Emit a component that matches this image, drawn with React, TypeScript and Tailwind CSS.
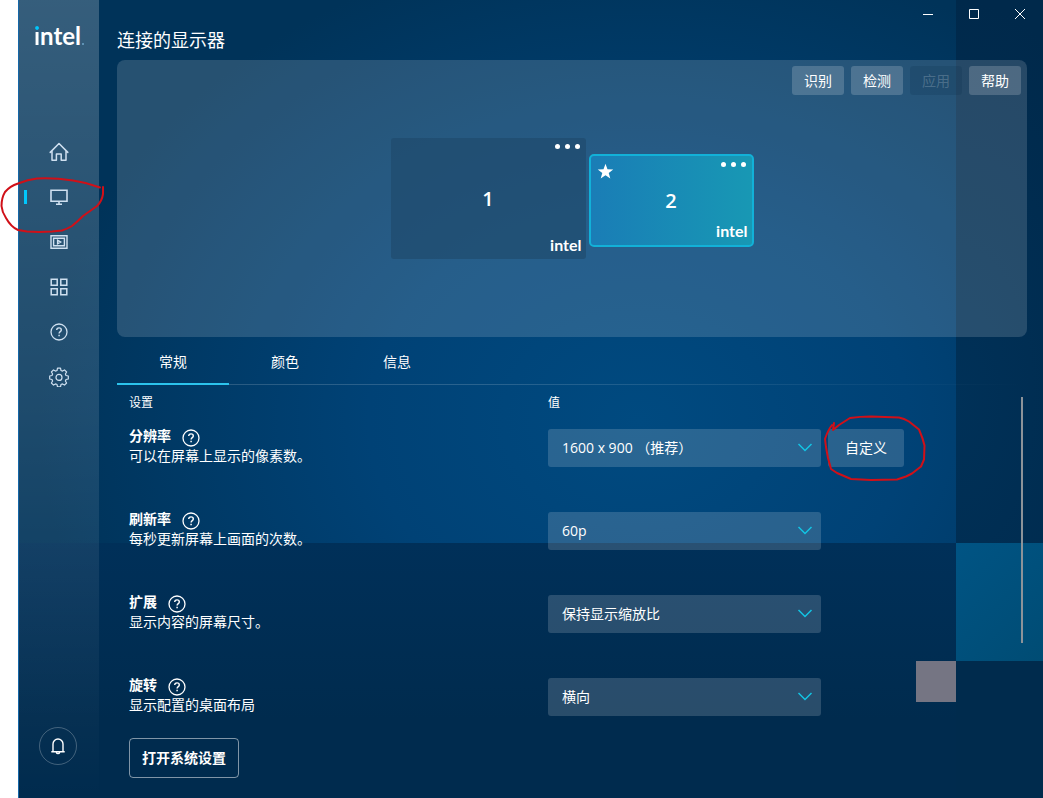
import React, { useState } from "react";

const FONT = "font-['Open_Sans','Noto_Sans_CJK_SC',sans-serif]";

type IconProps = { className?: string };

function HomeIcon() {
  return (
    <svg width="20" height="20" viewBox="0 0 20 20" fill="none" stroke="currentColor" strokeWidth="1.5" strokeLinejoin="round" strokeLinecap="round">
      <path d="M1.2 10.4 10 1.5l8.8 8.9M3 9v9.3h4.4v-6.4h4.8v6.4H17V9" />
    </svg>
  );
}

function DisplayIcon() {
  return (
    <svg width="20" height="20" viewBox="0 0 20 20" fill="none" stroke="currentColor" strokeWidth="1.6">
      <path d="M2 3.2h16v11H2zM10 14.2v2.600M7 17.200h6" />
    </svg>
  );
}

function VideoIcon() {
  return (
    <svg width="20" height="20" viewBox="0 0 20 20" fill="none" stroke="currentColor" strokeWidth="1.4">
      <path d="M2 3.8h16v12.400H2zM4.600 6.200h10.800v7.600H4.600z" />
      <path d="M8.600 8.300v3.400l3-1.700z" />
    </svg>
  );
}

function GridIcon() {
  return (
    <svg width="20" height="20" viewBox="0 0 20 20" fill="none" stroke="currentColor" strokeWidth="1.5">
      <path d="M2.200 2.200h6v6h-6zM11.800 2.200h6v6h-6zM2.200 11.800h6v6h-6zM11.800 11.800h6v6h-6z" />
    </svg>
  );
}

function HelpIcon({ className = "size-5" }: IconProps) {
  return (
    <svg className={className} viewBox="0 0 20 20" fill="none" stroke="currentColor" strokeWidth="1.3">
      <circle cx="10" cy="10" r="8" />
      <path d="M7.700 8.100c0-1.400 1-2.200 2.300-2.200s2.300.8 2.300 2c0 1.700-2.200 1.700-2.200 3.500" strokeWidth="1.400" />
      <path d="M10.100 12.800v1.500" strokeWidth="1.500" />
    </svg>
  );
}

function GearIcon() {
  return (
    <svg width="20" height="20" viewBox="0 0 20 20" fill="none" stroke="currentColor" strokeWidth="1.200" strokeLinejoin="round">
      <path d="M8.500 1.200h3l.5 2.300 1.500.6 2-1.200 2.100 2.100-1.200 2 .6 1.500 2.300.5v3l-2.300.5-.6 1.500 1.200 2-2.100 2.100-2-1.200-1.500.6-.5 2.300h-3L8 17.500l-1.500-.6-2 1.200L2.400 16l1.200-2-.6-1.500L.7 12V9L3 8.500 3.600 7 2.400 5l2.100-2.100 2 1.200L8 3.500z" />
      <circle cx="10" cy="10.400" r="3" />
    </svg>
  );
}

function BellIcon() {
  return (
    <svg width="18" height="18" viewBox="0 0 18 18" fill="none" stroke="currentColor" strokeWidth="1.400">
      <path d="M2.300 14.800h13.400M4 14.600V7a5 5 0 0 1 10 0v7.600M7.300 15.400a1.800 1.800 0 0 0 3.400 0" />
    </svg>
  );
}

function Logo() {
  return (
    <div className="flex items-baseline font-['Lato',sans-serif] text-2xl leading-6 font-bold text-white">
      <span>
        <span className="bg-[linear-gradient(#00c7fd_10px,#fff_10px)] bg-clip-text text-transparent">i</span>ntel
      </span>
      <span className="ml-px size-[2px] rounded-full bg-[#6fa5c8]" />
    </div>
  );
}

function Backdrop() {
  return (
    <div aria-hidden="true" className="absolute inset-0 grid grid-cols-[1fr_40px_87px] grid-rows-[543px_118px_41px_1fr] bg-[linear-gradient(#003059_543px,#002b4e_720px)]">
      <div className="col-span-2 bg-[radial-gradient(ellipse_600px_480px_at_620px_420px,#004a80,#004276_45%,#003359_100%)]" />
      <div className="bg-[radial-gradient(ellipse_200px_400px_at_0px_400px,#003158,#00294b)]" />
      <div className="col-start-3 row-start-2 bg-[linear-gradient(135deg,#005484,#004c74)]" />
      <div className="col-start-2 row-start-3 bg-[#757583]" />
      <div className="col-start-3 row-span-2 row-start-3 bg-[#002b4d]" />
    </div>
  );
}

const navItems = [
  { label: "主页", icon: <HomeIcon /> },
  { label: "显示器", icon: <DisplayIcon /> },
  { label: "视频", icon: <VideoIcon /> },
  { label: "应用程序", icon: <GridIcon /> },
  { label: "支持", icon: <HelpIcon /> },
  { label: "首选项", icon: <GearIcon /> },
];

function Sidebar() {
  return (
    <aside className="relative flex w-20 shrink-0 flex-col items-center bg-linear-to-b from-white/21 via-white/12 to-white/0 pb-[33px]">
      <div className="flex h-[129px] items-start pt-6">
        <Logo />
      </div>
      <nav className="flex w-full flex-col">
        {navItems.map((item, i) => (
          <button key={item.label} type="button" aria-label={item.label} className="relative flex h-[45px] items-center justify-center text-[#cfe0f0]">
            {i === 1 && <span className="absolute left-[5px] h-[14px] w-[3px] bg-[#00c7fd]" />}
            {item.icon}
          </button>
        ))}
      </nav>
      <button type="button" aria-label="通知" className="mt-auto mr-[2px] flex size-[38px] items-center justify-center rounded-full border border-white/25 text-white">
        <BellIcon />
      </button>
    </aside>
  );
}

function WindowControls() {
  const cls = "flex h-7 w-[46px] items-center justify-center text-white";
  return (
    <div className="flex justify-end">
      <button type="button" aria-label="最小化" className={cls}>
        <svg width="10" height="10" viewBox="0 0 10 10" stroke="currentColor"><path d="M0 5.500h10" /></svg>
      </button>
      <button type="button" aria-label="最大化" className={cls}>
        <svg width="10" height="10" viewBox="0 0 10 10" fill="none" stroke="currentColor"><path d="M.5.5h9v9h-9z" /></svg>
      </button>
      <button type="button" aria-label="关闭" className={cls}>
        <svg width="10" height="10" viewBox="0 0 10 10" stroke="currentColor"><path d="M0 0l10 10M10 0 0 10" /></svg>
      </button>
    </div>
  );
}

function Dots() {
  return (
    <button type="button" aria-label="更多选项" className="absolute top-[6px] right-[6px] flex gap-[5px]">
      <span className="size-[5px] rounded-full bg-white" />
      <span className="size-[5px] rounded-full bg-white" />
      <span className="size-[5px] rounded-full bg-white" />
    </button>
  );
}

function MonitorLogo() {
  return <span className="absolute right-1 bottom-1 font-['Lato',sans-serif] text-base leading-5 font-bold">intel</span>;
}

function DisplayPanel() {
  const btn = "h-[29px] w-13 rounded-[3px] text-sm";
  return (
    <section className="flex h-[277px] flex-col rounded-lg bg-white/15 p-[6px]">
      <div className="flex justify-end gap-[7px]">
        <button type="button" className={`${btn} bg-white/18 text-white`}>识别</button>
        <button type="button" className={`${btn} bg-white/18 text-white`}>检测</button>
        <button type="button" disabled className={`${btn} bg-[#001e3c]/15 text-white/20`}>应用</button>
        <button type="button" className={`${btn} bg-white/18 text-white`}>帮助</button>
      </div>
      <div className="mt-[43px] flex items-start justify-center gap-[3px] text-xl font-semibold text-white">
        <div className="relative flex h-[121px] w-[195px] items-center justify-center rounded-[3px] bg-[#1f4a6c]/65">
          1
          <Dots />
          <MonitorLogo />
        </div>
        <div className="relative mt-4 flex h-[93px] w-[165px] items-center justify-center rounded-[5px] border-2 border-[#12b1d8] bg-linear-to-r from-[#1a7db6] to-[#1898b4]">
          2
          <svg className="absolute top-[7px] left-[6px]" width="17" height="17" viewBox="0 0 18 18" fill="#fff">
            <path d="M9 .8l2.100 5.700 6.100.3-4.800 3.700 1.700 5.900L9 13l-5.100 3.400 1.700-5.900L.8 6.800l6.100-.3z" />
          </svg>
          <Dots />
          <MonitorLogo />
        </div>
      </div>
    </section>
  );
}

function Tabs() {
  const [active, setActive] = useState("常规");
  return (
    <div role="tablist" className="flex h-12 bg-[linear-gradient(90deg,rgba(255,255,255,0.16)_40%,transparent)] bg-[length:100%_1px] bg-bottom bg-no-repeat">
      {["常规", "颜色", "信息"].map((t) => (
        <button
          key={t}
          type="button"
          role="tab"
          aria-selected={active === t}
          onClick={() => setActive(t)}
          className={`w-28 border-b-2 pt-1 text-sm text-white ${active === t ? "border-[#2cc3ec]" : "border-transparent"}`}
        >
          {t}
        </button>
      ))}
    </div>
  );
}

type Setting = { id: string; title: string; text: string; value: string; custom?: boolean };

const settings: Setting[] = [
  { id: "resolution", title: "分辨率", text: "可以在屏幕上显示的像素数。", value: "1600 x 900 （推荐）", custom: true },
  { id: "refresh", title: "刷新率", text: "每秒更新屏幕上画面的次数。", value: "60p" },
  { id: "scale", title: "扩展", text: "显示内容的屏幕尺寸。", value: "保持显示缩放比" },
  { id: "rotation", title: "旋转", text: "显示配置的桌面布局", value: "横向" },
];

function SettingRow({ s }: { s: Setting }) {
  return (
    <div className="grid h-[83px] grid-cols-[431fr_479fr] items-start">
      <div className="pl-3 text-sm leading-5 text-white">
        <div className="flex items-center gap-[10px]">
          <label htmlFor={s.id} className="font-bold">{s.title}</label>
          <button type="button" aria-label={`${s.title}帮助`} className="mt-[2px] -mb-[2px]">
            <HelpIcon />
          </button>
        </div>
        <p>{s.text}</p>
      </div>
      <div className="flex gap-[7px] pt-[3px]">
        <div className="relative w-[273px]">
          <select id={s.id} defaultValue={s.value} className="h-[38px] w-full appearance-none rounded-[3px] bg-white/16 pr-9 pl-[14px] text-sm text-white">
            <option className="text-black">{s.value}</option>
          </select>
          <svg className="pointer-events-none absolute top-[14px] right-2" width="16" height="9" viewBox="0 0 16 9" fill="none" stroke="#12c4e4" strokeWidth="1.500">
            <path d="M1.500 1 8 7.500 14.500 1" />
          </svg>
        </div>
        {s.custom && (
          <button type="button" className="h-[38px] w-[76px] rounded-[3px] bg-white/16 text-sm text-white">自定义</button>
        )}
      </div>
    </div>
  );
}

function Annotations() {
  return (
    <>
      <svg aria-hidden="true" className="pointer-events-none absolute top-[170px] left-0" width="110" height="70" viewBox="0 170 110 70" fill="none" stroke="#d01018" strokeWidth="2" strokeLinecap="round" strokeLinejoin="round">
        <path d="M103 187v7q-1 7-6 12-7 5-14 10-6 6-11 10-5 3-10 4.500l-10 1-13 .500-12-.500-9-1.500q-7-3-12-12-4-6-4.500-12 0-8 3.500-14 5-6 13-8.500 10-4 19-5 16-1 36 2 14 2 27 7" />
      </svg>
      <svg aria-hidden="true" className="pointer-events-none absolute top-[410px] left-[820px]" width="110" height="76" viewBox="820 410 110 76" fill="none" stroke="#d01018" strokeWidth="2" strokeLinecap="round" strokeLinejoin="round">
        <path d="M834 423l-1 7 6-5 11-7q10-1.500 21-1.500l28 1q5 1 10 4l10 8q4 9 5.500 16l-.5 14-3 7-9 7-6 3-9 3-26 .500-20-1-14-6-6-4-3-11-2-11-1-8q3-9 7-14" />
      </svg>
    </>
  );
}

export default function App() {
  return (
    <div className={`relative flex min-h-screen bg-white pl-[18px] ${FONT}`}>
      <div className="relative flex flex-1 overflow-hidden border-l border-[#1567a8]">
        <Backdrop />
        <Sidebar />
        <main className="relative flex-1">
          <WindowControls />
          <div className="pr-4 pl-[18px]">
            <h1 className="mb-2 text-lg leading-6 text-white">连接的显示器</h1>
            <DisplayPanel />
            <Tabs />
            <div className="relative">
              <div className="grid h-[41px] grid-cols-[431fr_479fr] pt-2 text-xs leading-5 text-white">
                <span className="pl-3">设置</span>
                <span>值</span>
              </div>
              {settings.map((s) => (
                <SettingRow key={s.id} s={s} />
              ))}
              <div className="absolute top-3 right-1 h-[246px] w-[2px] bg-[#8d9399]" />
            </div>
            <div className="-mt-5 pb-5 pl-3">
              <button type="button" className="h-10 w-[110px] rounded-sm border border-white/50 text-sm font-bold text-white">打开系统设置</button>
            </div>
          </div>
        </main>
      </div>
      <Annotations />
    </div>
  );
}
